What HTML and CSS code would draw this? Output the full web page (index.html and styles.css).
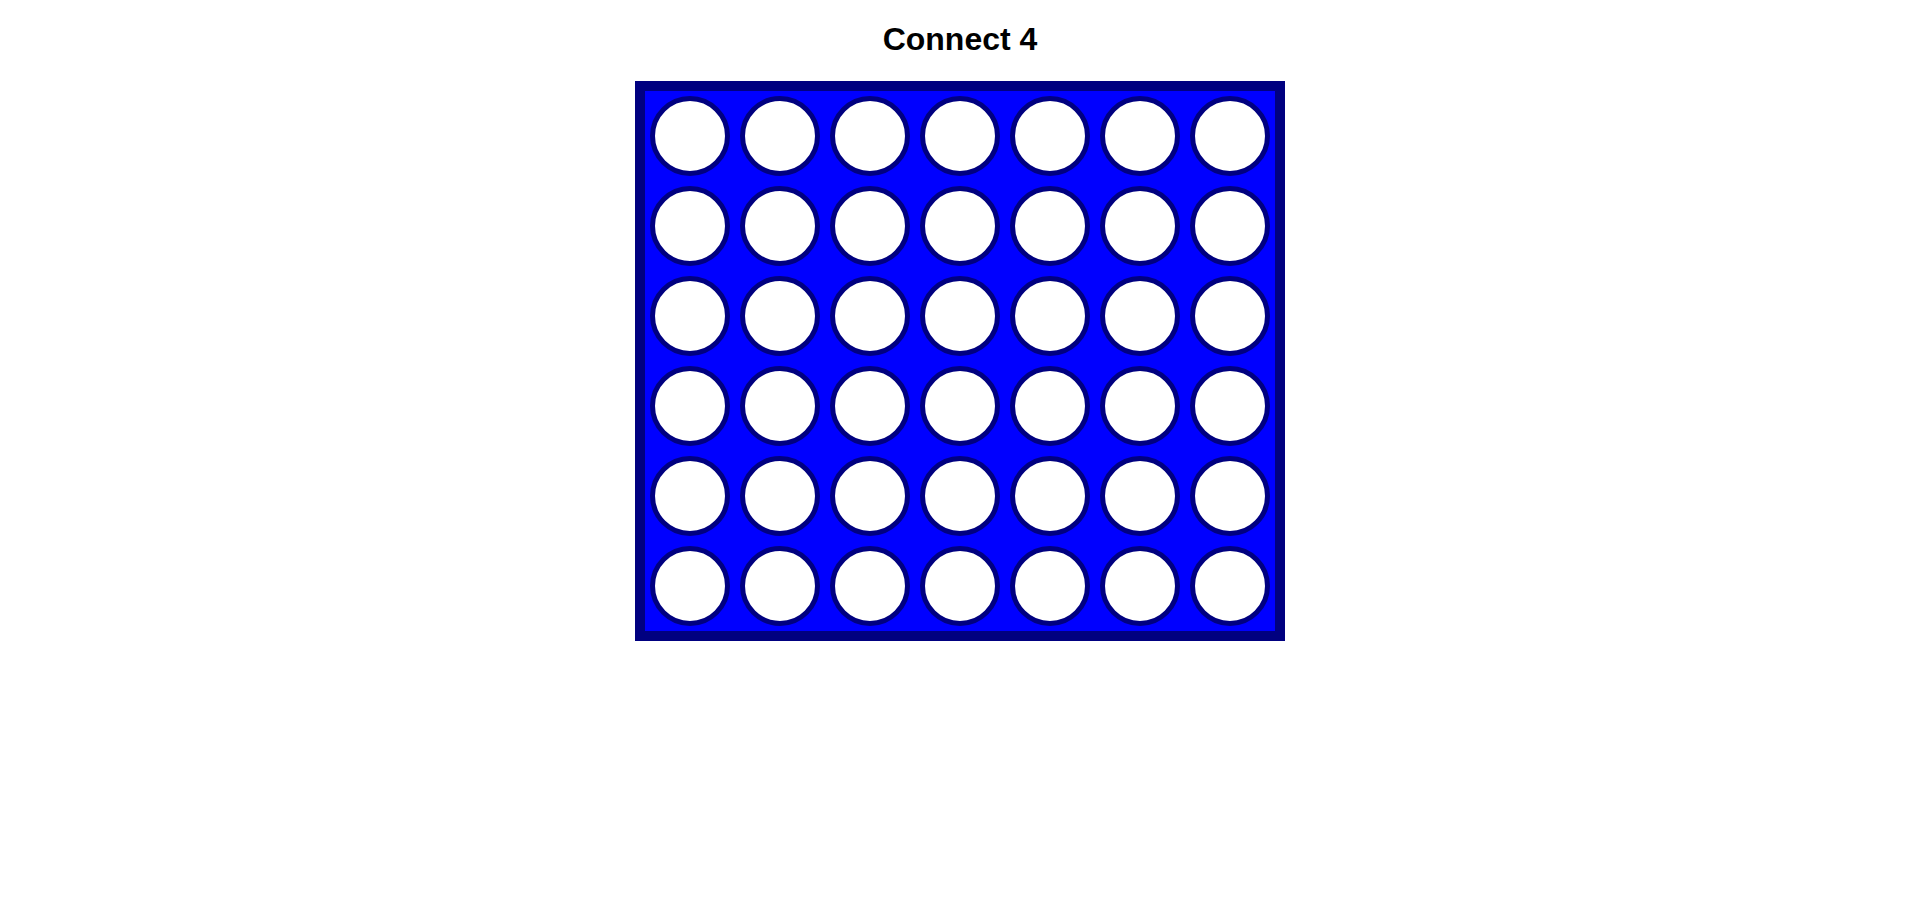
FILE: index.html
```html
<!DOCTYPE html>
<html>
<head>
<meta charset="utf-8">
<title>Connect 4</title>
<link rel="stylesheet" href="styles.css">
</head>
<body>
<h1 class="title">Connect 4</h1>
<div class="board">
  <div class="cell"></div><div class="cell"></div><div class="cell"></div><div class="cell"></div><div class="cell"></div><div class="cell"></div><div class="cell"></div>
  <div class="cell"></div><div class="cell"></div><div class="cell"></div><div class="cell"></div><div class="cell"></div><div class="cell"></div><div class="cell"></div>
  <div class="cell"></div><div class="cell"></div><div class="cell"></div><div class="cell"></div><div class="cell"></div><div class="cell"></div><div class="cell"></div>
  <div class="cell"></div><div class="cell"></div><div class="cell"></div><div class="cell"></div><div class="cell"></div><div class="cell"></div><div class="cell"></div>
  <div class="cell"></div><div class="cell"></div><div class="cell"></div><div class="cell"></div><div class="cell"></div><div class="cell"></div><div class="cell"></div>
  <div class="cell"></div><div class="cell"></div><div class="cell"></div><div class="cell"></div><div class="cell"></div><div class="cell"></div><div class="cell"></div>
</div>
</body>
</html>
```
FILE: styles.css
```css
html, body {
  margin: 0;
  padding: 0;
  background: #ffffff;
}
body {
  font-family: "Liberation Sans", Arial, sans-serif;
  display: flex;
  flex-direction: column;
  align-items: center;
}
.title {
  font-size: 32px;
  font-weight: bold;
  line-height: 37px;
  margin: 21px 0 0 0;
  color: #000;
}
.board {
  margin-top: 23px;
  display: grid;
  grid-template-columns: repeat(7, 80px);
  grid-auto-rows: 80px;
  gap: 10px;
  padding: 5px;
  background: #0000ff;
  border: 10px solid #000080;
}
.cell {
  box-sizing: border-box;
  width: 80px;
  height: 80px;
  border-radius: 50%;
  background: #ffffff;
  border: 5px solid #000080;
}
```
